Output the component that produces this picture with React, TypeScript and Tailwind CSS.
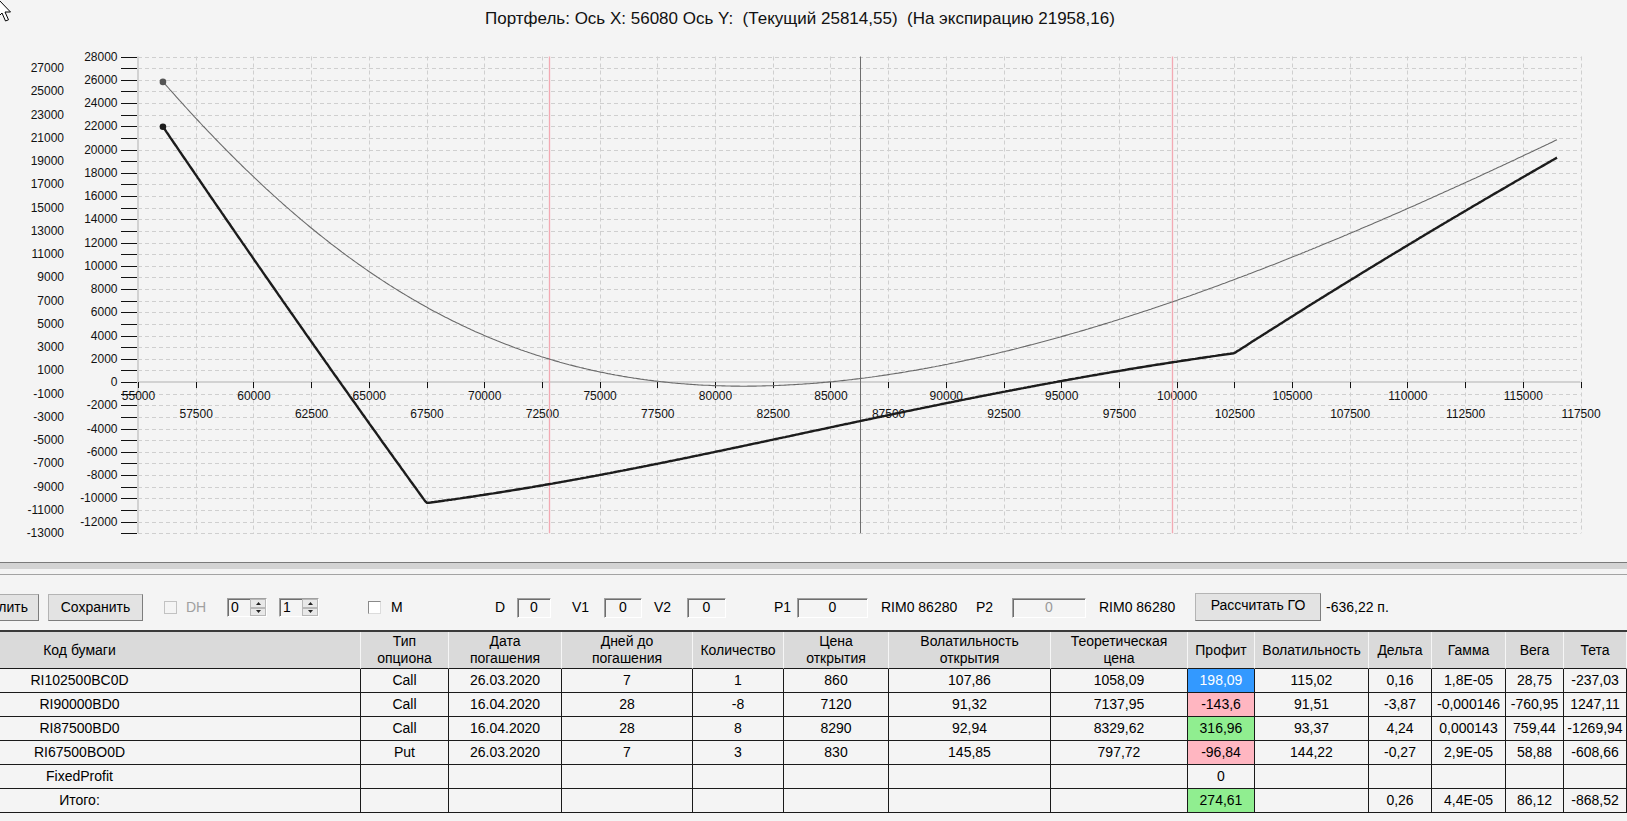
import React from "react";

const X = (s: number) => 138 + (s - 55000) * 0.02308;
const Y = (v: number) => 382 - v * 0.011625;
const px = (n: number) => Math.round(n) + 0.5;

function ncdf(x: number) {
  const t = 1 / (1 + 0.2316419 * Math.abs(x));
  const d = 0.3989422804014327 * Math.exp((-x * x) / 2);
  const p =
    d *
    t *
    (0.31938153 +
      t * (-0.356563782 + t * (1.781477937 + t * (-1.821255978 + t * 1.330274429))));
  return x > 0 ? 1 - p : p;
}

function bs(S: number, K: number, T: number, sig: number, isCall: boolean) {
  if (T <= 0) return isCall ? Math.max(S - K, 0) : Math.max(K - S, 0);
  const st = sig * Math.sqrt(T);
  const d1 = (Math.log(S / K) + 0.5 * st * st) / st;
  const d2 = d1 - st;
  return isCall ? S * ncdf(d1) - K * ncdf(d2) : K * ncdf(-d2) - S * ncdf(-d1);
}

const positions = [
  { K: 102500, call: true, q: 1, open: 860, vol: 1.1502, days: 7 },
  { K: 90000, call: true, q: -8, open: 7120, vol: 0.9151, days: 28 },
  { K: 87500, call: true, q: 8, open: 8290, vol: 0.9337, days: 28 },
  { K: 67500, call: false, q: 3, open: 830, vol: 1.4422, days: 7 },
];

function portfolio(S: number, shift: number) {
  let sum = 0;
  for (const p of positions) {
    sum += p.q * (bs(S, p.K, (p.days - shift) / 365, p.vol, p.call) - p.open);
  }
  return sum;
}

function curve(shift: number) {
  const pts: string[] = [];
  for (let s = 56080; s <= 116480; s += 80) {
    pts.push(`${X(s).toFixed(1)},${Y(portfolio(s, shift)).toFixed(1)}`);
  }
  return pts.join(" ");
}

function Chart() {
  const hVals: number[] = [];
  for (let v = -13000; v <= 28000; v += 1000) hVals.push(v);
  const xVals: number[] = [];
  for (let k = 0; k <= 25; k++) xVals.push(55000 + k * 2500);
  const top = Y(28000);
  const bottom = Y(-13000);
  const left = 138;
  const right = X(117500);
  const cur = curve(0);
  const exp = curve(7);
  return (
    <svg width={1627} height={524} viewBox="0 38 1627 524" className="block">
      <g stroke="#cfcfcf" strokeWidth={1} strokeDasharray="4 3">
        {hVals
          .filter((v) => v !== 0)
          .map((v) => (
            <line key={"h" + v} x1={left} x2={right} y1={px(Y(v))} y2={px(Y(v))} />
          ))}
        {xVals
          .filter((s) => s !== 55000)
          .map((s) => (
            <line key={"v" + s} x1={px(X(s))} x2={px(X(s))} y1={top} y2={bottom} />
          ))}
      </g>
      <line x1={left} x2={right} y1={382} y2={382} stroke="#d2d2d2" strokeWidth={2} />
      <line x1={left} x2={left} y1={top} y2={bottom} stroke="#d2d2d2" strokeWidth={2} />
      <g stroke="#111" strokeWidth={1}>
        {hVals.map((v) => (
          <line key={"t" + v} x1={121} x2={137} y1={px(Y(v))} y2={px(Y(v))} />
        ))}
        {xVals.map((s) => (
          <line key={"xt" + s} x1={px(X(s))} x2={px(X(s))} y1={382} y2={388} />
        ))}
      </g>
      <g
        fontFamily="'Liberation Sans', Arial, sans-serif"
        fontSize={12}
        fill="#111"
        dominantBaseline="central"
      >
        {hVals.map((v) =>
          Math.abs(v) % 2000 === 0 ? (
            <text key={"l" + v} x={117.5} y={Y(v)} textAnchor="end">
              {v}
            </text>
          ) : (
            <text key={"l" + v} x={64} y={Y(v)} textAnchor="end">
              {v}
            </text>
          )
        )}
        {xVals.map((s) => (
          <text
            key={"xl" + s}
            x={X(s) + 0.5}
            y={s % 5000 === 0 ? 396 : 414}
            textAnchor="middle"
          >
            {s}
          </text>
        ))}
      </g>
      <line x1={px(X(72790))} x2={px(X(72790))} y1={top} y2={bottom} stroke="#f3a9b3" strokeWidth={1.3} />
      <line x1={px(X(99780))} x2={px(X(99780))} y1={top} y2={bottom} stroke="#f3a9b3" strokeWidth={1.3} />
      <line x1={px(X(86280))} x2={px(X(86280))} y1={top} y2={bottom} stroke="#6e6e6e" strokeWidth={1} />
      <polyline points={cur} fill="none" stroke="#6a6a6a" strokeWidth={1.1} />
      <polyline points={exp} fill="none" stroke="#1c1c1c" strokeWidth={2.4} strokeLinejoin="round" />
      <circle cx={X(56080)} cy={Y(25814.55)} r={3.3} fill="#555" />
      <circle cx={X(56080)} cy={Y(21958.16)} r={3.3} fill="#1c1c1c" />
    </svg>
  );
}

function Cursor() {
  return (
    <svg className="absolute left-0 top-0" width={16} height={24} viewBox="0 0 16 24">
      <path
        d="M-2 -1 L-2 17 L2 13 L5.5 21 L8.5 19.8 L5 12 L10.5 12 Z"
        fill="#fff"
        stroke="#000"
        strokeWidth={1}
        strokeLinejoin="miter"
      />
    </svg>
  );
}

function Splitter() {
  return (
    <div className="h-[13px] flex flex-col">
      <div className="h-px bg-[#7a7a7a]" />
      <div className="h-[6px] bg-[#d3d3d3]" />
      <div className="h-[5px]" />
      <div className="h-px bg-[#a3a3a3]" />
    </div>
  );
}

function TextBox({ w, value, disabled }: { w: string; value: string; disabled?: boolean }) {
  return (
    <div
      className={`${w} h-[20px] shrink-0 flex items-center justify-center border border-t-[#a0a0a0] border-l-[#a0a0a0] border-b-[#ffffff] border-r-[#ffffff] shadow-[inset_1px_1px_0_#6e6e6e] bg-[#f4f4f4] ${
        disabled ? "text-[#9a9a9a]" : "text-black"
      }`}
    >
      {value}
    </div>
  );
}

function Spin({ ml, value }: { ml: string; value: string }) {
  return (
    <div
      className={`${ml} w-[40px] h-[19px] shrink-0 flex border border-t-[#a0a0a0] border-l-[#a0a0a0] border-b-[#ffffff] border-r-[#ffffff] shadow-[inset_1px_1px_0_#6e6e6e] bg-[#f4f4f4]`}
    >
      <div className="flex-1 pl-[3px] leading-[17px]">{value}</div>
      <div className="w-[16px] flex flex-col">
        <div className="flex-1 flex items-center justify-center border border-[#b8b8b8] bg-[#e8e8e8]">
          <svg width="5" height="3" viewBox="0 0 5 3">
            <path d="M0 3 L2.5 0 L5 3 Z" fill="#222" />
          </svg>
        </div>
        <div className="flex-1 flex items-center justify-center border border-[#b8b8b8] bg-[#e8e8e8]">
          <svg width="5" height="3" viewBox="0 0 5 3">
            <path d="M0 0 L5 0 L2.5 3 Z" fill="#222" />
          </svg>
        </div>
      </div>
    </div>
  );
}

function CheckBox({ ml, disabled }: { ml: string; disabled?: boolean }) {
  return (
    <div
      className={`${ml} w-[13px] h-[13px] shrink-0 border ${
        disabled
          ? "border-[#c2c2c2] bg-[#f4f4f4]"
          : "border-t-[#8a8a8a] border-l-[#8a8a8a] border-b-[#dcdcdc] border-r-[#dcdcdc] bg-white"
      }`}
    />
  );
}

function Label({ ml, w, children, gray }: { ml: string; w: string; children: React.ReactNode; gray?: boolean }) {
  return (
    <div className={`${ml} ${w} shrink-0 whitespace-nowrap ${gray ? "text-[#a0a0a0]" : "text-black"}`}>
      {children}
    </div>
  );
}

function Toolbar() {
  return (
    <div className="h-[55px] pt-[10px] flex items-center text-[14px]">
      <div className="w-[39px] h-[27px] shrink-0 flex items-center justify-end pr-[10px] bg-[#e3e3e3] border border-l-0 border-[#adadad] border-r-[#7d7d7d] border-b-[#7d7d7d]">
        лить
      </div>
      <div className="ml-[9px] w-[95px] h-[27px] shrink-0 flex items-center justify-center bg-[#e3e3e3] border border-[#b4b4b4] border-r-[#7d7d7d] border-b-[#7d7d7d]">
        Сохранить
      </div>
      <CheckBox ml="ml-[21px]" disabled />
      <Label ml="ml-[9px]" w="w-[20px]" gray>
        DH
      </Label>
      <Spin ml="ml-[21px]" value="0" />
      <Spin ml="ml-[12px]" value="1" />
      <CheckBox ml="ml-[49px]" />
      <Label ml="ml-[10px]" w="w-[12px]">
        M
      </Label>
      <Label ml="ml-[92px]" w="w-[12px]">
        D
      </Label>
      <div className="ml-[10px]">
        <TextBox w="w-[34px]" value="0" />
      </div>
      <Label ml="ml-[21px]" w="w-[20px]">
        V1
      </Label>
      <div className="ml-[12px]">
        <TextBox w="w-[38px]" value="0" />
      </div>
      <Label ml="ml-[12px]" w="w-[20px]">
        V2
      </Label>
      <div className="ml-[13px]">
        <TextBox w="w-[39px]" value="0" />
      </div>
      <Label ml="ml-[48px]" w="w-[20px]">
        P1
      </Label>
      <div className="ml-[3px]">
        <TextBox w="w-[71px]" value="0" />
      </div>
      <Label ml="ml-[13px]" w="w-[78px]">
        RIM0 86280
      </Label>
      <Label ml="ml-[17px]" w="w-[18px]">
        P2
      </Label>
      <div className="ml-[18px]">
        <TextBox w="w-[74px]" value="0" disabled />
      </div>
      <Label ml="ml-[13px]" w="w-[77px]">
        RIM0 86280
      </Label>
      <div className="ml-[19px] w-[126px] h-[28px] -mt-[2px] shrink-0 flex items-center justify-center pb-[3px] bg-[#e3e3e3] border border-[#b4b4b4] border-r-[#7d7d7d] border-b-[#7d7d7d]">
        Рассчитать ГО
      </div>
      <Label ml="ml-[5px]" w="w-[80px]">
        -636,22 п.
      </Label>
    </div>
  );
}

const headers: string[][] = [
  ["Код бумаги"],
  ["Тип", "опциона"],
  ["Дата", "погашения"],
  ["Дней до", "погашения"],
  ["Количество"],
  ["Цена", "открытия"],
  ["Волатильность", "открытия"],
  ["Теоретическая", "цена"],
  ["Профит"],
  ["Волатильность"],
  ["Дельта"],
  ["Гамма"],
  ["Вега"],
  ["Тета"],
];

const rows: string[][] = [
  ["RI102500BC0D", "Call", "26.03.2020", "7", "1", "860", "107,86", "1058,09", "198,09", "115,02", "0,16", "1,8E-05", "28,75", "-237,03"],
  ["RI90000BD0", "Call", "16.04.2020", "28", "-8", "7120", "91,32", "7137,95", "-143,6", "91,51", "-3,87", "-0,000146", "-760,95", "1247,11"],
  ["RI87500BD0", "Call", "16.04.2020", "28", "8", "8290", "92,94", "8329,62", "316,96", "93,37", "4,24", "0,000143", "759,44", "-1269,94"],
  ["RI67500BO0D", "Put", "26.03.2020", "7", "3", "830", "145,85", "797,72", "-96,84", "144,22", "-0,27", "2,9E-05", "58,88", "-608,66"],
  ["FixedProfit", "", "", "", "", "", "", "", "0", "", "", "", "", ""],
  ["Итого:", "", "", "", "", "", "", "", "274,61", "", "0,26", "4,4E-05", "86,12", "-868,52"],
];

const profitBg = ["bg-[#3399ff] text-white", "bg-[#ffb6c1]", "bg-[#90ee90]", "bg-[#ffb6c1]", "", "bg-[#90ee90]"];

function Table() {
  return (
    <div className="border-t-2 border-[#3a3a3a] text-[14px]">
      <div className="grid grid-cols-[361px_88px_113px_131px_91px_105px_162px_137px_67px_114px_63px_74px_58px_63px]">
        {headers.map((h, i) => (
          <div
            key={"h" + i}
            className={`h-[37px] bg-[#dadada] border-b border-b-[#1a1a1a] border-r border-r-[#f6f6f6] flex flex-col items-center justify-center text-center leading-[17px] whitespace-nowrap ${
              i === 0 ? "pr-[201px]" : ""
            }`}
          >
            {h.map((line, li) => (
              <span key={li}>{line}</span>
            ))}
          </div>
        ))}
        {rows.map((r, ri) =>
          r.map((c, ci) => (
            <div
              key={ri + "-" + ci}
              className={`h-[24px] border-r border-b border-[#1a1a1a] flex items-center justify-center whitespace-nowrap ${
                ci === 0 ? "pr-[201px]" : ""
              } ${ci === 8 ? profitBg[ri] : ""}`}
            >
              {c}
            </div>
          ))
        )}
      </div>
    </div>
  );
}

export default function App() {
  return (
    <div className="relative w-[1627px] h-[821px] overflow-hidden bg-[#f4f4f4] font-['Liberation_Sans',Arial,sans-serif] text-black">
      <div className="h-[38px] flex items-center pl-[485px] text-[17px] text-[#111] whitespace-pre">
        Портфель: Ось X: 56080 Ось Y:  (Текущий 25814,55)  (На экспирацию 21958,16)
      </div>
      <Chart />
      <Splitter />
      <Toolbar />
      <Table />
      <Cursor />
    </div>
  );
}
